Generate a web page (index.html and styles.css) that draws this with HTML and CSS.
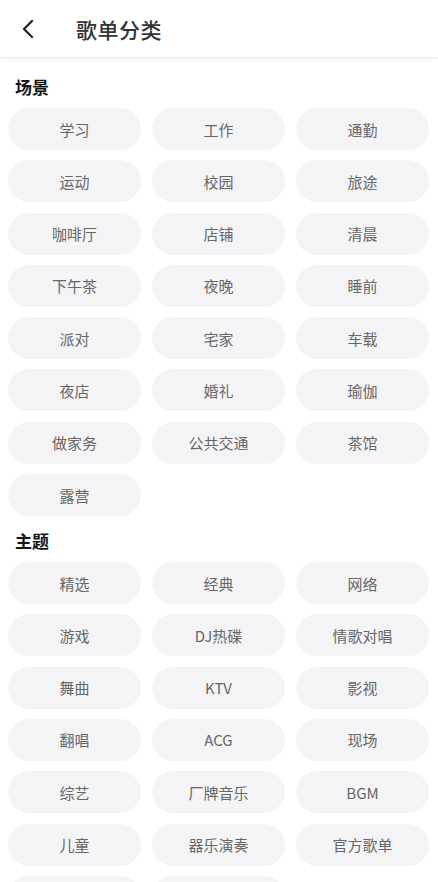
FILE: index.html
```html
<!DOCTYPE html>
<html lang="zh">
<head>
<meta charset="utf-8">
<title>歌单分类</title>
<link rel="stylesheet" href="styles.css">
</head>
<body>
<div class="page">
  <header class="header">
    <span class="back">
      <svg width="14" height="20" viewBox="0 0 14 20"><path d="M11 2 L3 10 L11 18" fill="none" stroke="#222" stroke-width="2.3" stroke-linecap="round" stroke-linejoin="round"/></svg>
    </span>
    <h1 class="title">歌单分类</h1>
  </header>
  <main class="content">
    <section class="section">
      <h2 class="section-title">场景</h2>
      <div class="grid">
        <div class="chip">学习</div><div class="chip">工作</div><div class="chip">通勤</div>
        <div class="chip">运动</div><div class="chip">校园</div><div class="chip">旅途</div>
        <div class="chip">咖啡厅</div><div class="chip">店铺</div><div class="chip">清晨</div>
        <div class="chip">下午茶</div><div class="chip">夜晚</div><div class="chip">睡前</div>
        <div class="chip">派对</div><div class="chip">宅家</div><div class="chip">车载</div>
        <div class="chip">夜店</div><div class="chip">婚礼</div><div class="chip">瑜伽</div>
        <div class="chip">做家务</div><div class="chip">公共交通</div><div class="chip">茶馆</div>
        <div class="chip">露营</div>
      </div>
    </section>
    <section class="section">
      <h2 class="section-title">主题</h2>
      <div class="grid">
        <div class="chip">精选</div><div class="chip">经典</div><div class="chip">网络</div>
        <div class="chip">游戏</div><div class="chip">DJ热碟</div><div class="chip">情歌对唱</div>
        <div class="chip">舞曲</div><div class="chip">KTV</div><div class="chip">影视</div>
        <div class="chip">翻唱</div><div class="chip">ACG</div><div class="chip">现场</div>
        <div class="chip">综艺</div><div class="chip">厂牌音乐</div><div class="chip">BGM</div>
        <div class="chip">儿童</div><div class="chip">器乐演奏</div><div class="chip">官方歌单</div>
        <div class="chip"></div><div class="chip"></div>
      </div>
    </section>
  </main>
</div>
</body>
</html>
```
FILE: styles.css
```css
* { box-sizing: border-box; margin: 0; padding: 0; }
html, body { background: #fff; }
body {
  font-family: "Noto Sans CJK SC", "Noto Sans", sans-serif;
  width: 438px;
  height: 882px;
  overflow: hidden;
}
.page { width: 438px; }
.header {
  height: 58px;
  display: flex;
  align-items: center;
  padding-left: 21px;
  box-shadow: 0 1px 4px rgba(0,0,0,0.07);
  border-bottom: 1px solid #efefef;
  position: relative;
  z-index: 1;
  background: #fff;
}
.back { display: flex; width: 14px; height: 20px; margin-top: 1px; }
.title {
  margin-left: 41px;
  font-size: 21px;
  font-weight: 500;
  color: #333;
  letter-spacing: 0.5px;
  line-height: 30px;
}
.content { padding: 17px 9px 0 8px; }
.section-title {
  font-size: 17px;
  font-weight: 700;
  color: #161616;
  line-height: 24px;
  padding-left: 7px;
  margin-bottom: 9px;
}
.section + .section { margin-top: 13px; }
.grid {
  display: grid;
  grid-template-columns: repeat(3, 133px);
  column-gap: 11px;
  row-gap: 10.3px;
}
.chip {
  height: 42px;
  border-radius: 21px;
  background: #f4f4f6;
  color: #666;
  font-size: 15px;
  display: flex;
  align-items: center;
  justify-content: center;
}
```
